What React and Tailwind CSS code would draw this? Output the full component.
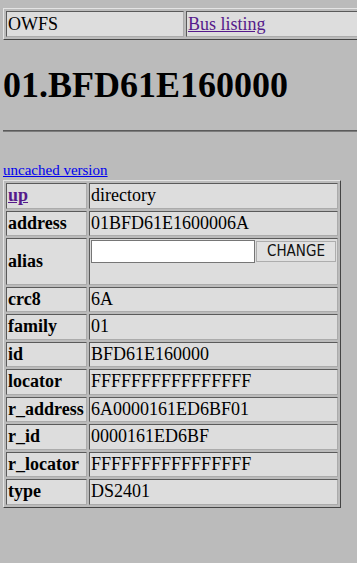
const cell =
  "border border-t-[#5a5a5a] border-l-[#5a5a5a] border-b-[#ababab] border-r-[#ababab] bg-[#dddddd] p-[1px] align-middle text-left";
const frame =
  "border-separate border-spacing-[2px] border border-t-[#e4e4e4] border-l-[#e4e4e4] border-b-[#444444] border-r-[#444444]";

const rows = [
  ["crc8", "6A"],
  ["family", "01"],
  ["id", "BFD61E160000"],
  ["locator", "FFFFFFFFFFFFFFFF"],
  ["r_address", "6A0000161ED6BF01"],
  ["r_id", "0000161ED6BF"],
  ["r_locator", "FFFFFFFFFFFFFFFF"],
  ["type", "DS2401"],
];

export default function App() {
  return (
    <div className="min-h-screen overflow-hidden bg-[#bbbbbb] pl-[3px] pt-[8px] font-['Liberation_Serif','Times_New_Roman',serif] text-[18px] leading-[21px] text-black">
      {/* top bar */}
      <table className={frame + " w-[400px]"}>
        <tbody>
          <tr>
            <td className={cell + " h-[26px] w-[178px]"}>OWFS</td>
            <td className={cell + " h-[26px]"}>
              <a href="#" className="text-[#551a8b] underline">
                Bus listing
              </a>
            </td>
          </tr>
        </tbody>
      </table>

      <h1 className="mt-[24px] text-[36px] font-bold leading-[42px]">
        01.BFD61E160000
      </h1>

      <hr className="mt-[24px] h-0 border-0 border-t border-b border-t-[#5a5a5a] border-b-[#7c7c7c]" />

      <a
        href="#"
        className="mt-[30px] block w-fit text-[15px] leading-[17px] text-[#0000ee] underline"
      >
        uncached version
      </a>

      {/* device properties */}
      <table className={frame + " mt-[1px] w-[338px]"}>
        <tbody>
          <tr>
            <td className={cell + " h-[25.5px] w-[81px] font-bold"}>
              <a href="#" className="text-[#551a8b] underline">
                up
              </a>
            </td>
            <td className={cell + " h-[25.5px]"}>directory</td>
          </tr>
          <tr>
            <td className={cell + " h-[25.5px] font-bold"}>address</td>
            <td className={cell + " h-[25.5px]"}>01BFD61E1600006A</td>
          </tr>
          <tr>
            <td className={cell + " h-[46.5px] font-bold"}>alias</td>
            <td className={cell + " h-[46.5px] !align-top"}>
              <div className="flex items-start gap-[1px]">
                <input
                  type="text"
                  className="h-[23px] w-[164px] border border-[#767676] bg-white px-[2px] text-[13px] outline-none"
                />
                <button className="mt-[1px] h-[21px] w-[80px] border border-[#adadad] bg-[#e1e1e1] font-['DejaVu_Sans_Condensed','Roboto','Liberation_Sans',sans-serif] text-[15px] leading-[19px] text-[#111111]">
                  CHANGE
                </button>
              </div>
            </td>
          </tr>
          {rows.map(([k, v]) => (
            <tr key={k}>
              <td className={cell + " h-[25.5px] font-bold"}>{k}</td>
              <td className={cell + " h-[25.5px]"}>{v}</td>
            </tr>
          ))}
        </tbody>
      </table>
    </div>
  );
}
